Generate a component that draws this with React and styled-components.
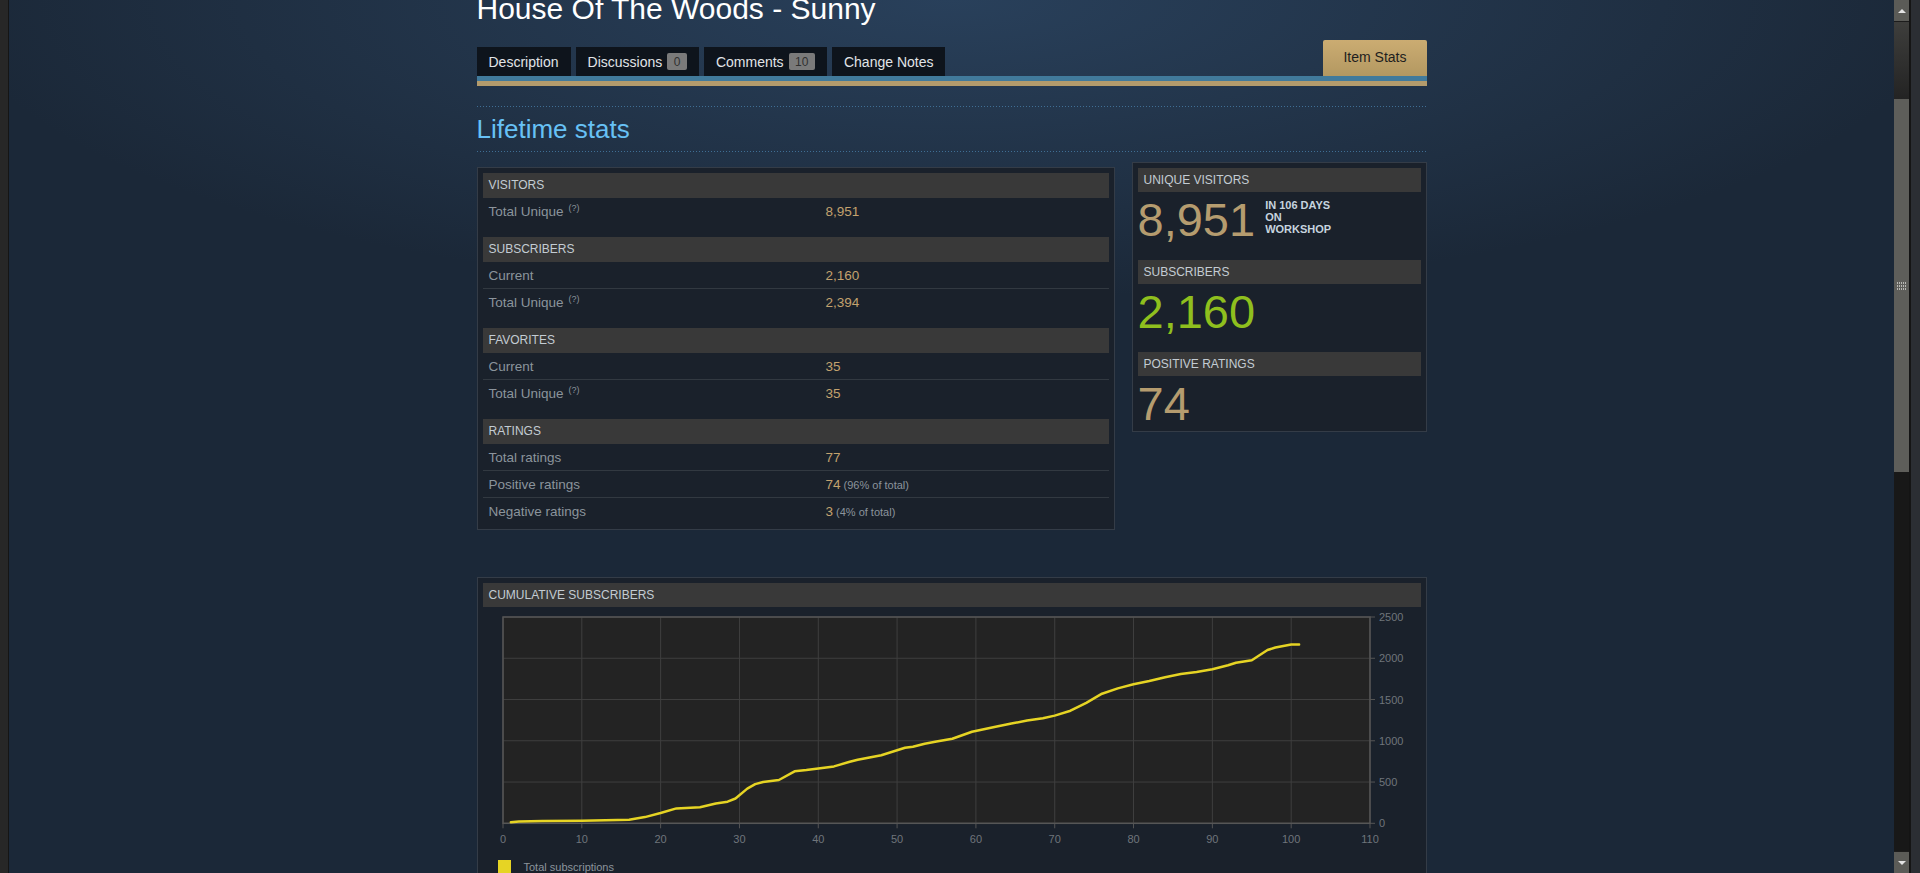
import React from "react";
import styled, { createGlobalStyle } from "styled-components";

const Global = createGlobalStyle`
  html, body {
    margin: 0;
    padding: 0;
    height: 100%;
    overflow: hidden;
    background: #1b2838;
  }
  #root { height: 100%; }
  * { box-sizing: border-box; }
`;

const FONT = `"Liberation Sans", Arial, Helvetica, sans-serif`;

const Frame = styled.div`
  display: flex;
  height: 873px;
  font-family: ${FONT};
`;

const EdgeLeft = styled.div`
  width: 9px;
  flex: none;
  background: #272727;
  border-right: 1px solid #151515;
`;

const EdgeRight = styled.div`
  width: 10px;
  flex: none;
  background: #2b2e33;
  border-left: 1px solid #151515;
`;

const Viewport = styled.main`
  flex: 1;
  overflow: hidden;
  background:
    radial-gradient(ellipse 1000px 300px at 50% 0%, rgba(50, 80, 114, 0.6), rgba(27, 40, 56, 0) 100%),
    #1b2838;
`;

const Column = styled.div`
  width: 950px;
  margin: 0 auto;
`;

const Title = styled.h1`
  margin: -6px 0 0;
  font-size: 30px;
  line-height: 30px;
  font-weight: normal;
  color: #ffffff;
  white-space: nowrap;
`;

const TabBar = styled.nav`
  display: flex;
  align-items: flex-end;
  gap: 5px;
  height: 36px;
  margin-top: 16px;
`;

const Tab = styled.div`
  display: flex;
  align-items: center;
  gap: 5px;
  height: 29px;
  padding: 0 12px;
  background: #0e141c;
  color: #e1e4e8;
  font-size: 14px;
  white-space: nowrap;
`;

const Count = styled.span`
  display: inline-flex;
  align-items: center;
  height: 17px;
  padding: 0 6.5px;
  border-radius: 2px;
  background: #7a7a7a;
  color: #303030;
  font-size: 12px;
`;

const ActiveTab = styled.div`
  margin-left: auto;
  display: flex;
  align-items: center;
  height: 36px;
  padding: 0 20px 2px;
  border-radius: 2px 2px 0 0;
  background: linear-gradient(to bottom, #cbac72 0%, #b39861 100%);
  color: #1e1e1e;
  font-size: 14px;
`;

const TabRule = styled.div`
  height: 10px;
  border-top: 5px solid #417a9b;
  background: #b39b6c;
`;

const dots = `repeating-linear-gradient(to right, #3f6e94 0 1px, transparent 1px 3px)`;

const SectionHead = styled.h2`
  margin: 20px 0 0;
  height: 46px;
  padding: 1px 0;
  background: ${dots} top / 100% 1px no-repeat, ${dots} bottom / 100% 1px no-repeat;
  font-size: 26px;
  line-height: 44px;
  font-weight: normal;
  color: #67c1f5;
`;

const StatsRow = styled.div`
  display: flex;
  align-items: flex-start;
  gap: 17px;
  margin-top: 10px;
`;

const Panel = styled.section`
  background: #1a212b;
  border: 1px solid #343c47;
  padding: ${(p) => p.$pad || "5px"};
  margin-top: ${(p) => p.$top || "0"};
  width: ${(p) => p.$w || "auto"};
  flex: ${(p) => (p.$w ? "none" : "1")};
`;

const Group = styled.div`
  & + & { margin-top: 13px; }
`;

const GroupHead = styled.div`
  height: ${(p) => p.$h || "25px"};
  line-height: ${(p) => p.$h || "25px"};
  padding: 0 6px;
  background: #393939;
  color: #c3ccd3;
  font-size: 12px;
  text-transform: uppercase;
`;

const StatLine = styled.div`
  display: grid;
  grid-template-columns: 337px 1fr;
  height: 26px;
  align-items: center;
  font-size: 13.5px;
  & + & { border-top: 1px solid #323941; height: 27px; }
`;

const StatName = styled.span`
  padding: 0 6px;
  color: #8b949c;
`;

const Hint = styled.sup`
  font-size: 9px;
  vertical-align: baseline;
  position: relative;
  top: -5px;
  margin-left: 5px;
`;

const StatValue = styled.span`
  padding: 0 6px;
  color: #c3a26e;
`;

const Share = styled.span`
  font-size: 11px;
  color: #8b949c;
  margin-left: 3px;
`;

const BigRow = styled.div`
  display: flex;
  align-items: flex-start;
  gap: 10px;
  padding-top: 4px;
  margin-bottom: ${(p) => (p.$last ? "0" : "16px")};
`;

const BigNumber = styled.div`
  font-size: 47px;
  line-height: 48px;
  color: ${(p) => p.$color};
`;

const BigNote = styled.div`
  margin-top: 3px;
  font-size: 11px;
  line-height: 12px;
  font-weight: bold;
  color: #c6d4df;
  text-transform: uppercase;
`;

const ChartPanel = styled(Panel)`
  margin-top: 47px;
`;

const Legend = styled.div`
  display: flex;
  align-items: center;
  gap: 13px;
  padding: 8px 0 0 15px;
  font-size: 11px;
  color: #8b949c;
`;

const Swatch = styled.span`
  width: 13px;
  height: 13px;
  background: #e6d424;
`;

const Scrollbar = styled.div`
  width: 16px;
  flex: none;
  display: flex;
  flex-direction: column;
  background: #181818;
  border-right: 1px solid #141414;
`;

const ArrowBtn = styled.div`
  flex: none;
  height: ${(p) => p.$h};
  display: flex;
  justify-content: center;
  align-items: center;
  background: #5b5b57;
  border-${(p) => (p.$down ? "top" : "bottom")}: 1px solid #1c1c1c;
  &::after {
    content: "";
    border-left: 4px solid transparent;
    border-right: 4px solid transparent;
    border-${(p) => (p.$down ? "top" : "bottom")}: 4px solid #e4e4e4;
  }
`;

const TrackTop = styled.div`
  flex: none;
  height: 77px;
  background: linear-gradient(to bottom, #3e3e3c 0%, #232323 100%);
`;

const Thumb = styled.div`
  flex: none;
  height: 373px;
  display: flex;
  align-items: center;
  justify-content: center;
  background: #5e5e5a;
`;

const TrackRest = styled.div`
  flex: 1;
`;

const points = [
  [1, 12], [2, 22], [5, 28], [10, 32], [16, 44], [18, 75], [20, 125], [22, 180],
  [25, 194], [27, 240], [28.5, 262], [29.5, 300], [31, 420], [32, 475], [33, 500],
  [35, 525], [37, 630], [38.5, 645], [40, 665], [42, 690], [44, 745], [45, 770],
  [48, 825], [51, 915], [52, 928], [53.5, 965], [55, 990], [57, 1025], [59.5, 1110],
  [62.5, 1170], [64.5, 1210], [66.5, 1245], [68.5, 1272], [70, 1305], [72, 1365],
  [74, 1460], [76, 1570], [78, 1635], [80, 1685], [82, 1725], [84, 1770], [86, 1808],
  [88, 1835], [90, 1868], [92, 1915], [93, 1945], [95, 1975], [97, 2100], [98, 2130],
  [100, 2165], [101, 2165],
];

const PX0 = 20;
const PX1 = 887;
const PY0 = 10;
const PY1 = 216.3;
const sx = (u) => PX0 + (u * (PX1 - PX0)) / 110;
const sy = (v) => PY1 - (v * (PY1 - PY0)) / 2500;

function SubscriberChart() {
  const xs = Array.from({ length: 12 }, (_, i) => i * 10);
  const ys = [0, 500, 1000, 1500, 2000, 2500];
  const d = points
    .map((p, i) => `${i ? "L" : "M"}${sx(p[0]).toFixed(1)} ${sy(p[1]).toFixed(1)}`)
    .join(" ");
  return (
    <svg width="938" height="245" style={{ display: "block" }}>
      <rect x={PX0} y={PY0} width={PX1 - PX0} height={PY1 - PY0} fill="#232323" />
      {xs.map((u) => (
        <g key={"x" + u}>
          <line x1={sx(u)} x2={sx(u)} y1={PY0} y2={PY1} stroke="#3f3f3f" strokeWidth="1" />
          <line x1={sx(u)} x2={sx(u)} y1={PY1} y2={PY1 + 5} stroke="#555" strokeWidth="1" />
          <text x={sx(u)} y="236" textAnchor="middle" fontSize="11" fill="#6f757b" fontFamily={FONT}>
            {u}
          </text>
        </g>
      ))}
      {ys.map((v) => (
        <g key={"y" + v}>
          <line x1={PX0} x2={PX1} y1={sy(v)} y2={sy(v)} stroke="#3f3f3f" strokeWidth="1" />
          <line x1={PX1} x2={PX1 + 5} y1={sy(v)} y2={sy(v)} stroke="#555" strokeWidth="1" />
          <text x="896" y={sy(v) + 4} fontSize="11" fill="#6f757b" fontFamily={FONT}>
            {v}
          </text>
        </g>
      ))}
      <rect x={PX0} y={PY0} width={PX1 - PX0} height={PY1 - PY0} fill="none" stroke="#565656" strokeWidth="1.5" />
      <path d={d} fill="none" stroke="#e6d424" strokeWidth="2.5" strokeLinejoin="round" strokeLinecap="round" />
    </svg>
  );
}

function Grip() {
  return (
    <svg width="9" height="8" viewBox="0 0 9 8">
      {[0, 2, 4, 6, 8].map((x) =>
        [0, 3, 6].map((y) => <rect key={x + "-" + y} x={x} y={y} width="1" height="2" fill="#b8b8b4" />)
      )}
    </svg>
  );
}

const groups = [
  {
    title: "Visitors",
    rows: [{ name: "Total Unique", hint: true, value: "8,951" }],
  },
  {
    title: "Subscribers",
    rows: [
      { name: "Current", value: "2,160" },
      { name: "Total Unique", hint: true, value: "2,394" },
    ],
  },
  {
    title: "Favorites",
    rows: [
      { name: "Current", value: "35" },
      { name: "Total Unique", hint: true, value: "35" },
    ],
  },
  {
    title: "Ratings",
    rows: [
      { name: "Total ratings", value: "77" },
      { name: "Positive ratings", value: "74", share: "(96% of total)" },
      { name: "Negative ratings", value: "3", share: "(4% of total)" },
    ],
  },
];

export default function App() {
  return (
    <>
      <Global />
      <Frame>
        <EdgeLeft />
        <Viewport>
          <Column>
            <Title>House Of The Woods - Sunny</Title>
            <TabBar>
              <Tab>Description</Tab>
              <Tab>
                Discussions <Count>0</Count>
              </Tab>
              <Tab>
                Comments <Count>10</Count>
              </Tab>
              <Tab>Change Notes</Tab>
              <ActiveTab>Item Stats</ActiveTab>
            </TabBar>
            <TabRule />
            <SectionHead>Lifetime stats</SectionHead>

            <StatsRow>
              <Panel $top="5px">
                {groups.map((g) => (
                  <Group key={g.title}>
                    <GroupHead>{g.title}</GroupHead>
                    {g.rows.map((r) => (
                      <StatLine key={r.name}>
                        <StatName>
                          {r.name}
                          {r.hint && <Hint>(?)</Hint>}
                        </StatName>
                        <StatValue>
                          {r.value}
                          {r.share && <Share>{r.share}</Share>}
                        </StatValue>
                      </StatLine>
                    ))}
                  </Group>
                ))}
              </Panel>

              <Panel $w="295px" $pad="5px 5px 3px">
                <GroupHead $h="24px">Unique Visitors</GroupHead>
                <BigRow>
                  <BigNumber $color="#b59c6f">8,951</BigNumber>
                  <BigNote>
                    In 106 days
                    <br />
                    on
                    <br />
                    workshop
                  </BigNote>
                </BigRow>
                <GroupHead $h="24px">Subscribers</GroupHead>
                <BigRow>
                  <BigNumber $color="#8fbf1e">2,160</BigNumber>
                </BigRow>
                <GroupHead $h="24px">Positive Ratings</GroupHead>
                <BigRow $last>
                  <BigNumber $color="#b59c6f">74</BigNumber>
                </BigRow>
              </Panel>
            </StatsRow>

            <ChartPanel>
              <GroupHead $h="24px">Cumulative Subscribers</GroupHead>
              <SubscriberChart />
              <Legend>
                <Swatch />
                Total subscriptions
              </Legend>
            </ChartPanel>
          </Column>
        </Viewport>
        <Scrollbar>
          <ArrowBtn $h="22px" />
          <TrackTop />
          <Thumb>
            <Grip />
          </Thumb>
          <TrackRest />
          <ArrowBtn $h="22px" $down />
        </Scrollbar>
        <EdgeRight />
      </Frame>
    </>
  );
}
